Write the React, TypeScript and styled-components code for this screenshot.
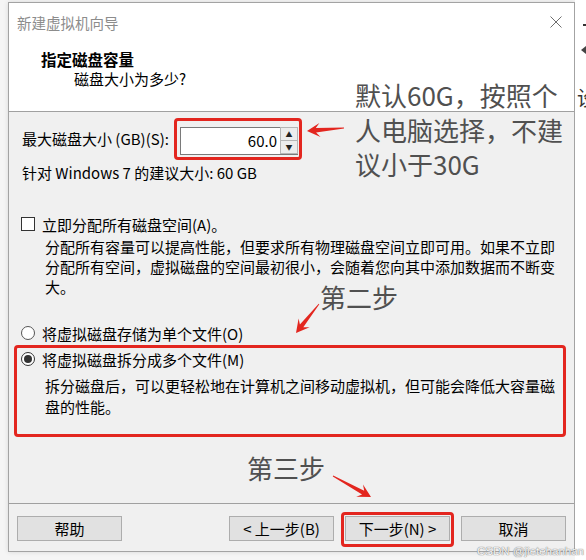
import React from "react";
import styled, { createGlobalStyle } from "styled-components";

const Global = createGlobalStyle`
  html, body { margin: 0; padding: 0; }
  body {
    width: 586px; height: 560px; overflow: hidden;
    background: #f5f5f5;
    font-family: "Noto Sans CJK SC", "Noto Sans", sans-serif;
  }
`;

const RED = "#e3261f";

const Page = styled.div`
  position: relative;
  width: 586px;
  height: 560px;
  display: flex;
  align-items: flex-start;
  padding-left: 8px;
  box-sizing: border-box;
  background: #f5f5f5;
  overflow: hidden;
`;

const Dialog = styled.div`
  margin-top: 2px;
  width: 567px;
  height: 550px;
  box-sizing: border-box;
  border: 1px solid #a3a3a3;
  background: #f0f0f0;
  display: flex;
  flex-direction: column;
  box-shadow: 0 0 5px rgba(0, 0, 0, 0.12);
`;

const Top = styled.div`
  height: 109px;
  box-sizing: border-box;
  background: #fff;
  border-bottom: 1px solid #a0a0a0;
`;

const TitleBar = styled.div`
  height: 38px;
  display: flex;
  align-items: center;
  justify-content: space-between;
  padding: 0 12px 0 8px;
`;

const TitleText = styled.span`
  font-size: 14.5px;
  color: #8c8c8c;
`;

const Header = styled.div`
  padding: 8px 0 0 32px;
`;

const HeaderTitle = styled.div`
  font-size: 15.5px;
  font-weight: 700;
  line-height: 20px;
  color: #000;
`;

const HeaderSub = styled.div`
  font-size: 15px;
  line-height: 20px;
  padding-left: 33px;
  color: #000;
`;

const Body = styled.div`
  flex: 1;
  padding: 6px 0 0 13px;
  display: flex;
  flex-direction: column;
  font-size: 15px;
  color: #000;
`;

const SizeRow = styled.div`
  display: flex;
  align-items: center;
  height: 42px;
`;

const SizeLabel = styled.span`
  flex: 0 0 152px;
  white-space: nowrap;
  line-height: 20px;
`;

const Highlight = styled.div<{ $pad: string }>`
  border: 3px solid ${RED};
  border-radius: 4px;
  padding: ${(p) => p.$pad};
  box-sizing: border-box;
`;

const Spinner = styled.div`
  width: 118px;
  height: 28px;
  box-sizing: border-box;
  border: 1px solid #7a7a7a;
  background: #fff;
  display: flex;
`;

const SpinValue = styled.div`
  flex: 1;
  text-align: right;
  padding-right: 3px;
  line-height: 26px;
  font-size: 15px;
`;

const SpinButtons = styled.div`
  width: 17px;
  display: flex;
  flex-direction: column;
`;

const SpinButton = styled.div`
  flex: 1;
  background: #ececec;
  border: 1px solid #b5b5b5;
  margin: -1px -1px 0 0;
  display: flex;
  align-items: center;
  justify-content: center;
  font-size: 7px;
  color: #222;
`;

const Line = styled.div<{ $mt: number }>`
  margin-top: ${(p) => p.$mt}px;
  line-height: 20px;
  white-space: nowrap;
`;

const OptionRow = styled.div<{ $mt: number }>`
  margin-top: ${(p) => p.$mt}px;
  display: flex;
  align-items: center;
  height: 20px;
  gap: 7px;
  margin-left: -1px;
  white-space: nowrap;
`;

const CheckBox = styled.span`
  width: 14px;
  height: 14px;
  box-sizing: border-box;
  border: 1px solid #333;
  background: #fff;
`;

const Radio = styled.span<{ $on?: boolean }>`
  width: 14px;
  height: 14px;
  box-sizing: border-box;
  border-radius: 50%;
  border: 1px solid ${(p) => (p.$on ? "#333" : "#555")};
  background: #fff;
  display: flex;
  align-items: center;
  justify-content: center;
  &::after {
    content: "";
    width: 8px;
    height: 8px;
    border-radius: 50%;
    background: ${(p) => (p.$on ? "#333" : "transparent")};
  }
`;

const Paragraph = styled.div<{ $mt: number; $lh: number }>`
  margin-top: ${(p) => p.$mt}px;
  padding-left: 23px;
  width: 515px;
  line-height: ${(p) => p.$lh}px;
`;

const SplitBox = styled.div`
  margin: 2px 0 0 -8px;
  width: 552px;
  height: 92px;
  box-sizing: border-box;
  border: 3px solid ${RED};
  border-radius: 4px;
  padding: 0 0 0 5px;
`;

const Footer = styled.div`
  height: 48px;
  box-sizing: border-box;
  border-top: 1px solid #a0a0a0;
  padding: 12px 8px 0 8px;
  display: flex;
  align-items: flex-start;
`;

const Button = styled.div`
  width: 105px;
  height: 25px;
  box-sizing: border-box;
  border: 1px solid #adadad;
  background: #e1e1e1;
  font-size: 15px;
  display: flex;
  align-items: center;
  justify-content: center;
  color: #000;
  white-space: nowrap;
`;

const Spacer = styled.div`
  flex: 1;
`;

const NextWrap = styled.div`
  margin: -4px 7px 0 7px;
`;

const RightStrip = styled.div`
  flex: 1;
  align-self: stretch;
  background: #fff;
  display: flex;
  flex-direction: column;
  overflow: hidden;
`;

const Dash = styled.span`
  margin: 24px 0 0 8px;
  width: 4px;
  height: 2px;
  background: #333;
`;

const Tri = styled.span`
  margin: 20px 0 0 6px;
  width: 0;
  height: 0;
  border-top: 4px solid transparent;
  border-bottom: 4px solid transparent;
  border-right: 5px solid #444;
`;

const CutGlyph = styled.span`
  margin: 32px 0 0 2px;
  font-size: 20px;
  line-height: 24px;
  color: #333;
  white-space: nowrap;
`;

const Note = styled.div<{ $x: number; $y: number }>`
  position: absolute;
  left: ${(p) => p.$x}px;
  top: ${(p) => p.$y}px;
  font-size: 26px;
  line-height: 34.5px;
  color: #505050;
  white-space: nowrap;
  pointer-events: none;
`;

const Overlay = styled.svg`
  position: absolute;
  left: 0;
  top: 0;
  pointer-events: none;
`;

const Watermark = styled.div`
  position: absolute;
  right: 2px;
  bottom: 3px;
  font-family: "Liberation Sans", sans-serif;
  font-size: 11.5px;
  color: rgba(255, 255, 255, 0.95);
  text-shadow: 0 0 1px #7a7a7a, 0 0 1px #7a7a7a;
  white-space: nowrap;
`;

function arrowPoints(x1: number, y1: number, x2: number, y2: number) {
  const dx = x2 - x1;
  const dy = y2 - y1;
  const L = Math.hypot(dx, dy);
  const ux = dx / L;
  const uy = dy / L;
  const nx = -uy;
  const ny = ux;
  const h = 13;
  const w = 7;
  const bx = x2 - ux * h;
  const by = y2 - uy * h;
  const nx2 = x2 - ux * (h - 4);
  const ny2 = y2 - uy * (h - 4);
  const pts: [number, number][] = [
    [x1 + nx * 0.4, y1 + ny * 0.4],
    [nx2 + nx * 2.2, ny2 + ny * 2.2],
    [bx + nx * w, by + ny * w],
    [x2, y2],
    [bx - nx * w, by - ny * w],
    [nx2 - nx * 2.2, ny2 - ny * 2.2],
    [x1 - nx * 0.4, y1 - ny * 0.4],
  ];
  return pts.map((p) => `${p[0].toFixed(1)},${p[1].toFixed(1)}`).join(" ");
}

const arrows = [
  [344, 128, 307, 131],
  [319, 304, 296, 333],
  [333, 476, 371, 497],
];

export default function App() {
  return (
    <>
      <Global />
      <Page>
        <Dialog>
          <Top>
            <TitleBar>
              <TitleText>新建虚拟机向导</TitleText>
              <svg width="12" height="12" viewBox="0 0 12 12">
                <path d="M0.5 0.5 L11.5 11.5 M11.5 0.5 L0.5 11.5" stroke="#6e6e6e" strokeWidth="1" />
              </svg>
            </TitleBar>
            <Header>
              <HeaderTitle>指定磁盘容量</HeaderTitle>
              <HeaderSub>磁盘大小为多少?</HeaderSub>
            </Header>
          </Top>
          <Body>
            <SizeRow>
              <SizeLabel>最大磁盘大小 (GB)(S):</SizeLabel>
              <Highlight $pad="6px 1px 2px 3px">
                <Spinner>
                  <SpinValue>60.0</SpinValue>
                  <SpinButtons>
                    <SpinButton>▲</SpinButton>
                    <SpinButton>▼</SpinButton>
                  </SpinButtons>
                </Spinner>
              </Highlight>
            </SizeRow>
            <Line $mt={3}>针对 Windows 7 的建议大小: 60 GB</Line>
            <OptionRow $mt={31}>
              <CheckBox />
              <span>立即分配所有磁盘空间(A)。</span>
            </OptionRow>
            <Paragraph $mt={3} $lh={20}>
              分配所有容量可以提高性能，但要求所有物理磁盘空间立即可用。如果不立即分配所有空间，虚拟磁盘的空间最初很小，会随着您向其中添加数据而不断变大。
            </Paragraph>
            <OptionRow $mt={26}>
              <Radio />
              <span>将虚拟磁盘存储为单个文件(O)</span>
            </OptionRow>
            <SplitBox>
              <OptionRow $mt={1}>
                <Radio $on />
                <span>将虚拟磁盘拆分成多个文件(M)</span>
              </OptionRow>
              <Paragraph $mt={6} $lh={21}>
                拆分磁盘后，可以更轻松地在计算机之间移动虚拟机，但可能会降低大容量磁盘的性能。
              </Paragraph>
            </SplitBox>
          </Body>
          <Footer>
            <Button>帮助</Button>
            <Spacer />
            <Button>&lt; 上一步(B)</Button>
            <NextWrap>
              <Highlight $pad="1px 1px 3px 1px">
                <Button>下一步(N) &gt;</Button>
              </Highlight>
            </NextWrap>
            <Button>取消</Button>
          </Footer>
        </Dialog>
        <RightStrip>
          <Dash />
          <Tri />
          <CutGlyph>设</CutGlyph>
        </RightStrip>

        <Note $x={355} $y={78}>
          默认60G，按照个
          <br />
          人电脑选择，不建
          <br />
          议小于30G
        </Note>
        <Note $x={320} $y={280}>第二步</Note>
        <Note $x={247} $y={451}>第三步</Note>

        <Overlay width="586" height="560" viewBox="0 0 586 560">
          {arrows.map((a, i) => (
            <polygon key={i} points={arrowPoints(a[0], a[1], a[2], a[3])} fill={RED} />
          ))}
        </Overlay>
        <Watermark>CSDN @jietehanhan</Watermark>
      </Page>
    </>
  );
}
